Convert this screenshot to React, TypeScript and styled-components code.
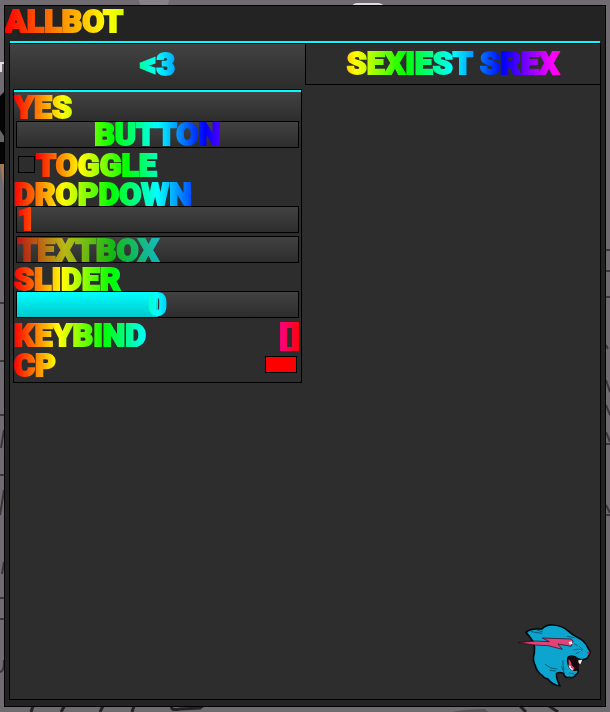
import React, { useState } from "react";
import styled, { createGlobalStyle, css } from "styled-components";

const rainbow =
  "linear-gradient(90deg, #f00 0%, #ff0 17%, #0f0 34%, #0ff 50%, #00f 67%, #f0f 84%, #f00 100%)";
const surface = "linear-gradient(#424242, #2d2d2d)";

const lettering = css`
  font-family: Roboto, "Liberation Sans", sans-serif;
  font-size: 32px;
  font-weight: 900;
  text-transform: uppercase;
  white-space: nowrap;
  -webkit-text-stroke: 2px transparent;
`;

const rainbowFill = css`
  background: ${rainbow};
  -webkit-background-clip: text;
  background-clip: text;
  color: transparent;
`;

const Global = createGlobalStyle`
  *, *::before, *::after { box-sizing: border-box; }
  body { margin: 0; background: #706b70; }
  button, input, select { margin: 0; padding: 0; border: 0; background: none; color: inherit; }
`;

const Desktop = styled.div`
  position: relative;
  display: flex;
  min-height: 100vh;
  padding: 5px 4px;
`;

const Backdrop = styled.svg`
  position: absolute;
  inset: 0;
  width: 100%;
  height: 100%;
`;

const Window = styled.main`
  position: relative;
  flex: 1;
  min-width: 0;
  display: flex;
  flex-direction: column;
  padding: 0 4px 6px;
  border: 1px solid #000;
  background: #232323;
`;

const Title = styled.h1`
  ${lettering}
  ${rainbowFill}
  margin: 0 -4px;
  height: 35px;
  line-height: 30px;
`;

const Accent = styled.div`
  height: 2px;
  background: #0ff;
`;

const WindowAccent = styled(Accent)`
  margin: 0 1px;
`;

const Body = styled.div`
  flex: 1;
  display: flex;
  flex-direction: column;
  border: 1px solid #000;
  background: #2d2d2d;
`;

const Tabs = styled.div`
  display: grid;
  grid-template-columns: 1fr 1fr;
  height: 41px;
`;

const Tab = styled.button<{ $active: boolean }>`
  ${lettering}
  line-height: 38px;
  && { padding-bottom: 2px; }
  background: ${(p) => (p.$active ? surface : "#2d2d2d")};
  ${(p) => !p.$active && "border-left: 1px solid #000; border-bottom: 1px solid #000;"}
`;

const RainbowText = styled.span`
  ${rainbowFill}
  display: block;
  width: 100%;
`;

const Page = styled.div`
  flex: 1;
  display: flex;
  flex-direction: column;
  justify-content: space-between;
  padding: 4px 6px 9px 3px;
`;

const Columns = styled.div`
  display: grid;
  grid-template-columns: 1fr 1fr;
  gap: 3px;
`;

const Section = styled.section`
  border: 1px solid #000;
`;

const SectionTitle = styled.h2`
  ${lettering}
  margin: 0;
  height: 29px;
  line-height: 30px;
  background: ${surface};
`;

const Controls = styled.div`
  display: flex;
  flex-direction: column;
  gap: 3px;
  padding-bottom: 4px;
`;

const Field = styled.div`
  display: flex;
  flex-direction: column;
`;

const FieldLabel = styled.label`
  ${lettering}
  ${rainbowFill}
  display: block;
  height: 25px;
  line-height: 27px;
`;

const Box = styled.div`
  position: relative;
  height: 27px;
  margin: 0 2px;
  border: 1px solid #000;
  background: ${surface};
`;

const PushButton = styled.button`
  ${lettering}
  height: 27px;
  margin: 0 2px;
  border: 1px solid #000;
  background: ${surface};
  line-height: 25px;
`;

const Row = styled.div`
  display: flex;
  align-items: center;
  height: 27px;
`;

const RowLabel = styled.label`
  ${lettering}
  ${rainbowFill}
  flex: 1;
  line-height: 28px;
`;

const Tick = styled.input`
  appearance: none;
  width: 17px;
  height: 17px;
  && { margin: 0 1px 0 4px; }
  border: 1px solid #000;
  background: #2d2d2d;
  &:checked { background: #0ff; }
`;

const Choice = styled.select`
  ${lettering}
  ${rainbowFill}
  appearance: none;
  display: block;
  width: 100%;
  height: 25px;
  line-height: 25px;
  option { color: #000; }
`;

const TextInput = styled.input`
  ${lettering}
  ${rainbowFill}
  display: block;
  width: 100%;
  height: 25px;
  line-height: 25px;
  &::placeholder {
    ${rainbowFill}
    opacity: 0.65;
  }
`;

const Range = styled.input`
  appearance: none;
  position: absolute;
  inset: 0;
  width: 100%;
  height: 100%;
  opacity: 0;
`;

const RangeFill = styled.div`
  height: 100%;
  background: linear-gradient(#0ff, #00c8cc);
`;

const RangeValue = styled.output`
  ${lettering}
  ${rainbowFill}
  position: absolute;
  inset: 0;
  line-height: 25px;
  text-align: center;
  pointer-events: none;
`;

const KeyButton = styled.button`
  ${lettering}
  font-family: "Noto Sans", sans-serif;
  height: 33px;
  line-height: 27px;
  padding: 0 1px;
  background: linear-gradient(90deg, #ff0090, #f00);
  -webkit-background-clip: text;
  background-clip: text;
  color: transparent;
`;

const Swatch = styled.input`
  appearance: none;
  width: 32px;
  height: 17px;
  && { margin-right: 4px; }
  border: 1px solid #000;
  &::-webkit-color-swatch-wrapper { padding: 0; }
  &::-webkit-color-swatch { border: 0; border-radius: 0; }
`;

const Mascot = styled.svg`
  align-self: flex-end;
  width: 78px;
  height: 70px;
`;

function Stones() {
  return (
    <Backdrop viewBox="0 0 610 712" preserveAspectRatio="none" aria-hidden="true">
      <rect width="610" height="712" fill="#706b70" />
      <circle cx="154" cy="-4" r="16" fill="#858185" />
      <path d="M352 6c2-4 6-3 15-3s15-1 17 3z" fill="#dcdcdc" />
      <path d="M0 62h4v2H2v8H0z" fill="#ddd" />
      <path d="M0 96l4-4v72H0z" fill="#050505" />
      <path d="M0 130l4 6v6H0z" fill="#666" />
      <path d="M0 164h4v24z" fill="#a8794f" />
      <g stroke="#3a373a" fill="none" strokeWidth="2">
        <path d="M0 303h4M0 361h4M0 415h4M4 430L1 448M0 475h5M4 490L0 515M4 562l-2 12M0 598h4M0 619h4M4 660q0 12-4 12" />
        <path d="M606 250h4M606 271h4M606 297h4M606 345l2 4M606 380l4 12M606 405l4 10M606 432l4 10M606 444h4M606 505l4 8M606 515h4" />
      </g>
      <g stroke="#242224" fill="none" strokeWidth="3">
        <path d="M31 712l2-6M61 712l4-7M100 712l3-6M132 712l2-6M172 706q-2 5 8 3l20-1 4-3" />
        <path d="M520 706l6 6M549 706l9 6" />
      </g>
      <path d="M452 712q14-3 33-3l3 3z" fill="#565256" />
    </Backdrop>
  );
}

function Panther() {
  return (
    <Mascot viewBox="0 0 234 210" role="img" aria-label="Panther with a lightning bolt">
      <path
        d="M30 37C40 27 55 25 78 27C86 18 98 14 110 15C128 16 146 22 158 34C170 46 180 50 192 56C204 64 212 74 217 86C223 92 224 98 219 104C218 112 211 118 201 119C192 121 183 116 176 110C168 107 160 108 156 112C154 124 157 138 164 146C171 152 180 151 186 147C188 156 185 162 179 164C177 171 168 174 160 172C150 174 144 169 143 160C135 157 128 156 122 160C119 174 126 184 132 198C117 196 103 187 95 176C88 178 82 171 78 166C67 158 60 147 58 137C52 127 51 112 55 98C57 85 55 74 52 66C47 58 40 48 30 37Z"
        fill="#0ba5d0"
        stroke="#040b0e"
        strokeWidth="5"
        strokeLinejoin="round"
      />
      <path d="M157 112C165 105 174 110 182 117L190 132L185 150C174 156 160 149 157 136Z" fill="#16080d" />
      <path d="M158 118c5 4 8 10 9 18l9 9-4 6c-10-3-15-13-14-33z" fill="#e0446d" />
      <path d="M157 133c1 10 6 17 15 19l-3-7-4-2-1-5-4-1zM187 121l12-2-6 14-5-4z" fill="#f2eeee" />
      <path
        d="M7 68L58 63L100 65L79 54L166 57L171 64L166 79L126 72L139 88L96 77L56 75Z"
        fill="#e34278"
        stroke="#180711"
        strokeWidth="2"
        strokeLinejoin="round"
      />
      <path d="M158 66l9-2 3 7-9 3z" fill="#f4f0ef" />
      <path d="M213 95l8 1-2 8-5-2z" fill="#bb315f" />
      <path
        d="M45 35l32 5M62 30l17 5M154 49l21 4M175 72l9 4M174 90q16-6 24 1M180 101l10-5M190 79l10 10M88 133l16 11 19 3M103 151l15 2M141 122q-2 18 3 27M137 140l7 18M160 159l14 3"
        fill="none"
        stroke="#075c78"
        strokeWidth="3"
        strokeLinecap="round"
      />
    </Mascot>
  );
}

export default function App() {
  const [tab, setTab] = useState(0);
  const [value, setValue] = useState(0);
  return (
    <>
      <Global />
      <Desktop>
        <Stones />
        <Window>
          <Title>Allbot</Title>
          <WindowAccent />
          <Body>
            <Tabs>
              {["<3", "Sexiest Srex"].map((name, i) => (
                <Tab key={name} $active={tab === i} onClick={() => setTab(i)}>
                  <RainbowText>{name}</RainbowText>
                </Tab>
              ))}
            </Tabs>
            <Page>
              <Columns>
                <Section>
                  <Accent />
                  <SectionTitle><RainbowText>Yes</RainbowText></SectionTitle>
                  <Controls>
                    <PushButton><RainbowText>Button</RainbowText></PushButton>
                    <Row>
                      <Tick type="checkbox" id="toggle" />
                      <RowLabel htmlFor="toggle">Toggle</RowLabel>
                    </Row>
                    <Field>
                      <FieldLabel htmlFor="dropdown">Dropdown</FieldLabel>
                      <Box>
                        <Choice id="dropdown"><option>1</option><option>2</option></Choice>
                      </Box>
                    </Field>
                    <Box>
                      <TextInput placeholder="Textbox" aria-label="Textbox" />
                    </Box>
                    <Field>
                      <FieldLabel htmlFor="slider">Slider</FieldLabel>
                      <Box>
                        <RangeFill style={{ width: `${value + 50}%` }} />
                        <RangeValue htmlFor="slider">{value}</RangeValue>
                        <Range id="slider" type="range" min={-50} max={50} value={value} onChange={(e) => setValue(Number(e.target.value))} />
                      </Box>
                    </Field>
                    <Row>
                      <RowLabel htmlFor="keybind">Keybind</RowLabel>
                      <KeyButton id="keybind">[]</KeyButton>
                    </Row>
                    <Row>
                      <RowLabel htmlFor="cp">CP</RowLabel>
                      <Swatch id="cp" type="color" defaultValue="#ff0000" />
                    </Row>
                  </Controls>
                </Section>
              </Columns>
              <Panther />
            </Page>
          </Body>
        </Window>
      </Desktop>
    </>
  );
}
